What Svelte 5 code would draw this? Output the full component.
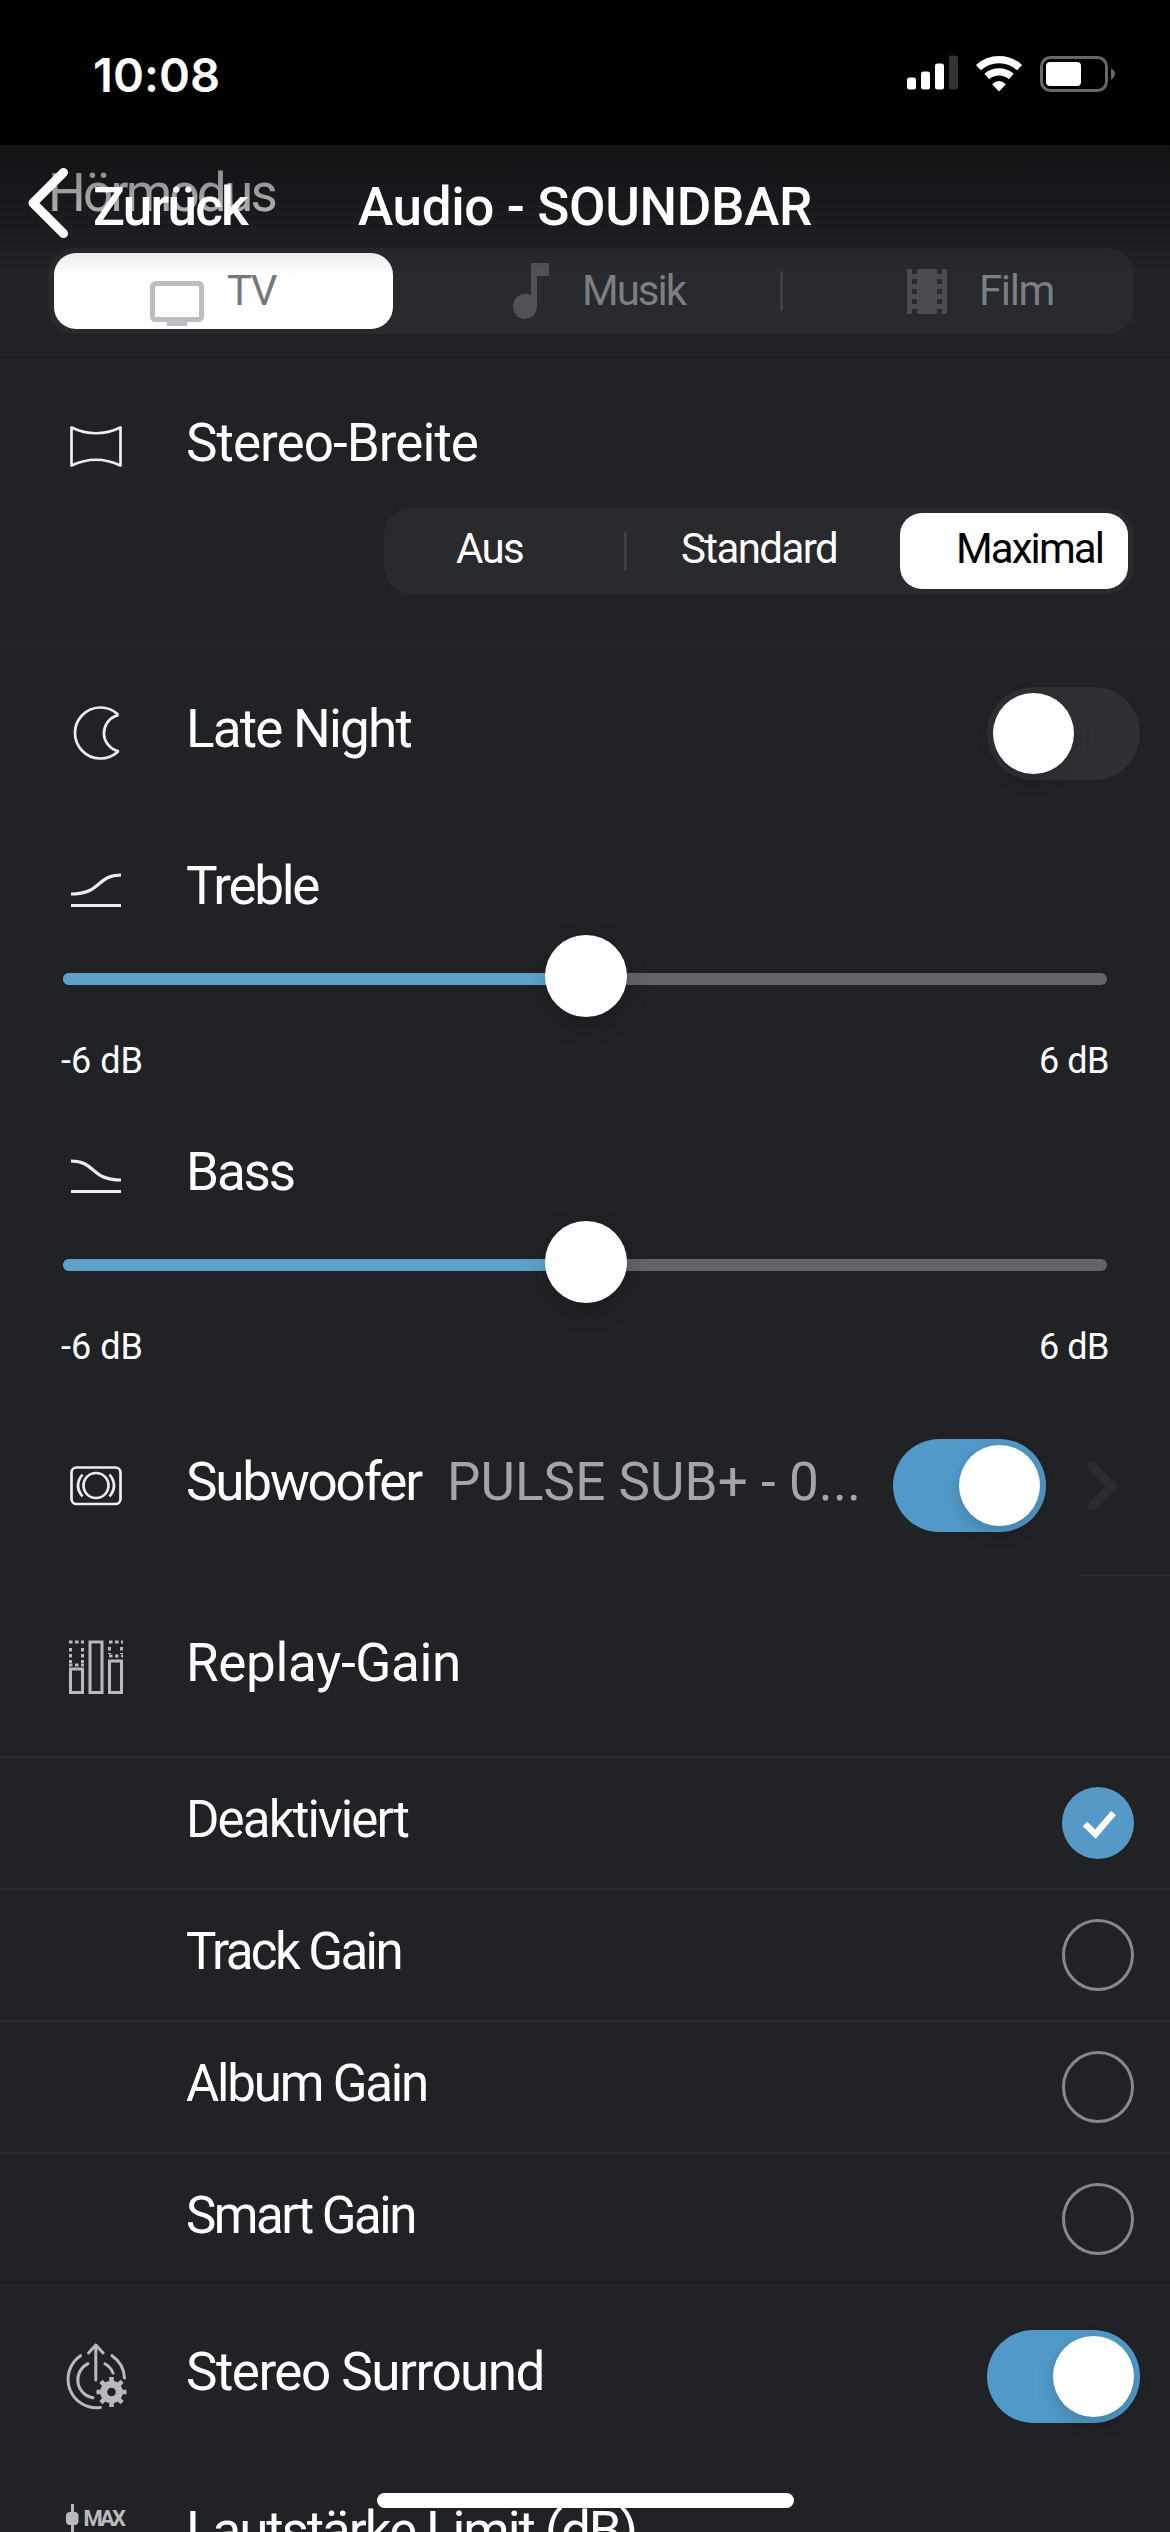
<script lang="ts">
    interface Option {
        label: string;
        width: number;
    }

    const gainOptions: Option[] = [
        { label: 'Deaktiviert', width: 222 },
        { label: 'Track Gain', width: 215 },
        { label: 'Album Gain', width: 241 },
        { label: 'Smart Gain', width: 229 }
    ];

    const gearTeeth: number[] = [0, 45, 90, 135, 180, 225, 270, 315];

    let gain: string = 'Deaktiviert';
    let lateNight: boolean = false;
    let subwoofer: boolean = true;
    let surround: boolean = true;
    let treble: number = 0;
    let bass: number = 0;

    function percent(value: number): number {
        return ((value + 6) / 12) * 100;
    }

    // Tracks a label so that it spans the given width
    function fit(node: HTMLElement, width: number): void {
        const natural = node.getBoundingClientRect().width;
        const gaps = (node.textContent ?? '').trim().length;
        node.style.letterSpacing = `${(width - natural) / gaps}px`;
    }
</script>

<div class="screen">
    <header class="status">
        <span class="time"><span use:fit={127}>10:08</span></span>
        <svg class="signal" viewBox="0 0 51 40">
            <rect x="0" y="22.500" width="9" height="12" rx="2.500" />
            <rect x="14" y="16.500" width="9" height="18" rx="2.500" />
            <rect x="28" y="8.500" width="9" height="26" rx="2.500" />
            <rect class="off" x="42" y="0.500" width="9" height="34" rx="2.500" />
        </svg>
        <svg class="wifi" viewBox="0 0 50 38">
            <path d="M3.500 13.500 A31 31 0 0 1 45.500 13.500" />
            <path d="M12 22.500 A19 19 0 0 1 37 22.500" />
            <path class="dot" d="M24.500 38 L17.500 30.500 Q24.500 24 31.500 30.500 Z" />
        </svg>
        <svg class="battery" viewBox="0 0 76 40">
            <rect class="shell" x="1.500" y="3.500" width="65" height="33" rx="9" />
            <rect x="6" y="8" width="35" height="24" rx="4" />
            <path class="nub" d="M71 14.500 Q75 16.500 75 20 Q75 23.500 71 25.500 Z" />
        </svg>
    </header>

    <nav>
        <button class="back">
            <svg viewBox="0 0 42 72"><path d="M36.500 5.500 L6 36 L36.500 66.500" /></svg>
            <span use:fit={154}>Zurück</span>
        </button>
        <h1><span use:fit={454}>Audio - SOUNDBAR</span></h1>
    </nav>

    <main>
        <section class="mode">
            <h2><span use:fit={227}>Hörmodus</span></h2>
            <div class="segments wide">
                <button class="segment active">
                    <svg class="tv" viewBox="0 0 54 45">
                        <rect x="2.500" y="2.500" width="49" height="36" rx="3" />
                        <path d="M17 38 H37 V45 H17 Z" />
                    </svg>
                    <span use:fit={49}>TV</span>
                </button>
                <button class="segment music">
                    <svg class="note" viewBox="0 0 36 56">
                        <path d="M18 0 H36 V13 H24 V43 A12 12.500 0 1 1 18 32.500 Z" />
                    </svg>
                    <span use:fit={103}>Musik</span>
                </button>
                <i class="divider"></i>
                <button class="segment movie">
                    <svg class="film" viewBox="0 0 40 45">
                        <path d="M0 0 H5 V5 H10 V0 H30 V5 H35 V0 H40 V45 H35 V40 H30 V45 H10 V40 H5 V45 H0 Z
                            M5 10 V15 H10 V10 Z M5 20 V25 H10 V20 Z M5 30 V35 H10 V30 Z
                            M30 10 V15 H35 V10 Z M30 20 V25 H35 V20 Z M30 30 V35 H35 V30 Z" />
                    </svg>
                    <span use:fit={75}>Film</span>
                </button>
            </div>
        </section>

        <section class="stereo">
            <div class="head">
                <svg class="icon" viewBox="0 0 60 66">
                    <path d="M5.500 13.500 Q30 25 54.500 13.500 V51.500 Q30 40 5.500 51.500 Z" />
                </svg>
                <span class="label"><span use:fit={292}>Stereo-Breite</span></span>
            </div>
            <div class="segments narrow">
                <button class="segment"><span use:fit={67}>Aus</span></button>
                <i class="divider"></i>
                <button class="segment standard"><span use:fit={156}>Standard</span></button>
                <button class="segment active maximal"><span use:fit={147}>Maximal</span></button>
            </div>
        </section>

        <section class="row late">
            <svg class="icon" viewBox="0 0 60 66">
                <path d="M51.500 14 A25.500 25.500 0 1 0 51.500 52 C52.500 51 51.500 50.500 50 50.500 A18.500 18.500 0 0 1 49.500 16 C51.500 15.500 52 15 51.500 14 Z" />
            </svg>
            <span class="label"><span use:fit={225}>Late Night</span></span>
            <button class="toggle" class:on={lateNight} aria-label="Late Night" on:click={() => (lateNight = !lateNight)}></button>
        </section>

        <section class="level">
            <div class="head">
                <svg class="icon" viewBox="0 0 60 66">
                    <path d="M5 37 C36 37 30 18 55 18 M5 48.500 H55" />
                </svg>
                <span class="label"><span use:fit={132}>Treble</span></span>
            </div>
            <div class="slider">
                <div class="fill" style="width: {percent(treble)}%"></div>
                <div class="knob" style="left: {percent(treble)}%"></div>
            </div>
            <div class="range">
                <span use:fit={82}>-6 dB</span>
                <span use:fit={70}>6 dB</span>
            </div>
        </section>

        <section class="level">
            <div class="head">
                <svg class="icon" viewBox="0 0 60 66">
                    <path d="M5 18 C30 18 24 37 55 37 M5 48.500 H55" />
                </svg>
                <span class="label"><span use:fit={108}>Bass</span></span>
            </div>
            <div class="slider">
                <div class="fill" style="width: {percent(bass)}%"></div>
                <div class="knob" style="left: {percent(bass)}%"></div>
            </div>
            <div class="range">
                <span use:fit={82}>-6 dB</span>
                <span use:fit={70}>6 dB</span>
            </div>
        </section>

        <section class="row sub">
            <svg class="icon" viewBox="0 0 60 66">
                <rect x="5.500" y="14.500" width="49" height="36.500" rx="5" />
                <circle cx="30" cy="32.500" r="12.500" />
                <path d="M16.500 21.500 Q7.500 32.500 16.500 43.500 M43.500 21.500 Q52.500 32.500 43.500 43.500" />
            </svg>
            <span class="label"><span use:fit={235}>Subwoofer</span></span>
            <span class="label device"><span use:fit={414}>PULSE SUB+ - 0...</span></span>
            <button class="toggle" class:on={subwoofer} aria-label="Subwoofer" on:click={() => (subwoofer = !subwoofer)}></button>
            <svg class="more" viewBox="0 0 30 50"><path d="M5 5 L25 25 L5 45" /></svg>
        </section>

        <section class="row replay">
            <svg class="icon dim" viewBox="0 0 60 66">
                <rect x="4.500" y="35" width="12" height="23.500" />
                <rect x="24" y="8" width="12" height="50.500" />
                <rect x="43.500" y="27" width="12" height="31.500" />
                <path class="dots" d="M3 8 H18 M3 31 H18 M4.500 14 V29 M16.500 14 V29 M43 8 H57 M43 22 H57 M43.500 13 V20 M55.500 13 V20" />
            </svg>
            <span class="label"><span use:fit={275}>Replay-Gain</span></span>
        </section>

        {#each gainOptions as option}
            <div class="option">
                <span class="label"><span use:fit={option.width}>{option.label}</span></span>
                <button class="radio" class:checked={gain === option.label} aria-label={option.label} on:click={() => (gain = option.label)}>
                    {#if gain === option.label}
                        <svg viewBox="0 0 72 72"><path d="M23 37 L33.500 47 L51.500 26" /></svg>
                    {/if}
                </button>
            </div>
        {/each}

        <section class="row surround">
            <svg class="icon dim" viewBox="0 0 60 66">
                <path d="M14.500 12.700 A28.500 28.500 0 0 0 34.300 64.500 M22 20.700 A18 18 0 0 0 27 54.700
                    M46 12.700 A28.500 28.500 0 0 1 58.500 35 M39 20.700 A18 18 0 0 1 47 30
                    M29.800 37 V2 M22.500 10 L29.800 2 L37.100 10" />
                <circle class="gear" cx="45.500" cy="49" r="7.800" />
                {#each gearTeeth as angle}
                    <path class="tooth" d="M45.500 40 V34" transform="rotate({angle} 45.500 49)" />
                {/each}
            </svg>
            <span class="label"><span use:fit={358}>Stereo Surround</span></span>
            <button class="toggle" class:on={surround} aria-label="Stereo Surround" on:click={() => (surround = !surround)}></button>
        </section>

        <section class="row limit">
            <svg class="icon dim" viewBox="0 0 60 66">
                <path d="M6.500 2 V66" />
                <rect class="solid" x="0" y="10" width="12.500" height="13" rx="4" />
                <text x="17.500" y="23.500" textLength="42.500">MAX</text>
            </svg>
            <span class="label"><span use:fit={450}>Lautstärke Limit (dB)</span></span>
        </section>
    </main>

    <div class="home"></div>
</div>

<style>
    :global(body) {
        background: #212226;
    }

    .screen {
        position: relative;
        width: 1170px;
        height: 2532px;
        overflow: hidden;
        background: #212226;
        color: #fff;
        font-family: Roboto, 'Noto Sans', sans-serif;
        font-size: 53px;
        white-space: nowrap;
    }

    .screen * {
        box-sizing: border-box;
    }

    button {
        padding: 0;
        border: 0;
        background: none;
        color: inherit;
        font: inherit;
    }

    svg {
        display: block;
        flex: none;
        fill: none;
        overflow: visible;
    }

    .status {
        display: flex;
        height: 145px;
        padding: 0 54px 0 93px;
        align-items: center;
        background: #000;
    }

    .time {
        flex: 1;
        padding-top: 4px;
        font-family: Inter, sans-serif;
        font-size: 47px;
        font-weight: 600;
    }

    .signal,
    .battery {
        height: 40px;
        fill: #fff;
    }

    .signal {
        width: 51px;
        margin: 4px 17px 0 0;
    }

    .off {
        fill: #333;
    }

    .wifi {
        width: 49px;
        height: 38px;
        margin-right: 16px;
        stroke: #fff;
        stroke-width: 7.500;
    }

    .dot {
        fill: #fff;
        stroke: none;
    }

    .battery {
        width: 76px;
        margin-top: 3px;
    }

    .shell {
        fill: none;
        stroke: #68686a;
        stroke-width: 3;
    }

    .nub {
        fill: #68686a;
    }

    nav {
        position: absolute;
        z-index: 2;
        top: 145px;
        left: 0;
        width: 100%;
        height: 130px;
        padding-top: 22px;
        background: linear-gradient(rgba(0, 0, 0, 0.450), rgba(0, 0, 0, 0.080) 83%, transparent);
        display: grid;
        grid-template-columns: 358px 1fr;
        align-items: start;
        font-weight: 500;
    }

    .back {
        display: flex;
        gap: 24px;
        padding-left: 27px;
        line-height: 80px;
    }

    .back svg {
        width: 42px;
        height: 72px;
        stroke: #fff;
        stroke-width: 9;
        stroke-linecap: round;
        stroke-linejoin: round;
    }

    h1,
    h2 {
        margin: 0;
        font-size: inherit;
        font-weight: inherit;
        line-height: 80px;
    }

    .mode {
        height: 210px;
        padding: 8px 36px 0 48px;
    }

    h2 {
        height: 95px;
        color: #dedede;
        font-weight: 400;
    }

    .segments {
        display: flex;
        height: 86px;
        padding: 5px 6px;
        align-items: center;
        border-radius: 27px;
        background: #282a2d;
        font-size: 42px;
    }

    .segment {
        display: flex;
        height: 76px;
        line-height: 76px;
    }

    .active {
        border-radius: 22px;
        background: #fff;
    }

    .wide {
        color: #7b7e82;
    }

    .wide .segment {
        align-items: center;
    }

    .wide .active {
        width: 339px;
        padding-left: 96px;
        gap: 23px;
        color: #74787d;
    }

    .tv {
        width: 54px;
        height: 45px;
        margin-top: 24px;
        stroke: #bbbdbf;
        stroke-width: 5;
    }

    .tv path {
        fill: #bbbdbf;
        stroke: none;
    }

    .music {
        width: 387px;
        padding-left: 120px;
        gap: 33px;
    }

    .note {
        width: 36px;
        height: 56px;
        fill: #505256;
    }

    .divider {
        width: 3px;
        height: 40px;
        border-radius: 2px;
        background: #3e4044;
    }

    .movie {
        padding-left: 124px;
        gap: 32px;
    }

    .film {
        width: 40px;
        height: 45px;
        fill: #4b4c50;
    }

    .stereo {
        height: 286px;
        padding-top: 51px;
        border-top: 1px solid #242529;
    }

    .head,
    .row {
        display: flex;
        align-items: center;
        padding-left: 66px;
    }

    .head {
        height: 80px;
    }

    .icon {
        width: 60px;
        height: 66px;
        margin-right: 60px;
        stroke: #eceeee;
        stroke-width: 2.700;
        stroke-linejoin: round;
    }

    .level .icon {
        stroke-width: 3.200;
    }

    .dim {
        stroke: #b9babc;
        stroke-width: 3;
    }

    .label {
        padding-bottom: 8px;
        line-height: 70px;
    }

    .narrow {
        width: 750px;
        margin: 21px 0 0 384px;
    }

    .narrow .segment:first-child {
        width: 234px;
        padding-left: 66px;
    }

    .narrow .segment span {
        position: relative;
        top: -2px;
    }

    .standard {
        width: 273px;
        padding-left: 54px;
    }

    .maximal {
        width: 228px;
        padding-left: 56px;
        color: #000;
    }

    .late {
        height: 185px;
        padding-bottom: 2px;
        border-top: 1px solid #242529;
    }

    .toggle {
        width: 153px;
        height: 93px;
        margin: 0 30px 0 auto;
        padding: 6px;
        border-radius: 47px;
        background: #2e3034;
    }

    .toggle::before {
        content: '';
        display: block;
        width: 81px;
        height: 81px;
        border-radius: 50%;
        background: #fff;
        box-shadow: 0 6px 18px rgba(0, 0, 0, 0.160);
    }

    .toggle.on {
        background: #5199c8;
    }

    .toggle.on::before {
        margin-left: 60px;
    }

    .level {
        height: 286px;
    }

    .level .head {
        height: 127px;
    }

    .slider {
        position: relative;
        height: 12px;
        margin: 20px 63px 0;
        border-radius: 6px;
        background: #636468;
    }

    .fill {
        height: 12px;
        border-radius: 6px;
        background: #5ca2cc;
    }

    .knob {
        position: absolute;
        top: -38px;
        width: 82px;
        height: 82px;
        margin-left: -40px;
        border-radius: 50%;
        background: #fff;
        box-shadow: 0 8px 24px rgba(0, 0, 0, 0.180);
    }

    .range {
        display: flex;
        justify-content: space-between;
        padding: 46px 61px 0;
        font-size: 36px;
        line-height: 60px;
    }

    .sub {
        position: relative;
        height: 179px;
        padding-bottom: 4px;
    }

    .sub::after {
        content: '';
        position: absolute;
        right: 0;
        bottom: 1px;
        width: 94px;
        height: 1px;
        background: #292a2e;
    }

    .device {
        margin-left: 26px;
        color: #a5a5a7;
    }

    .sub .toggle {
        margin-right: 41px;
    }

    .more {
        width: 30px;
        height: 50px;
        margin-right: 53px;
        stroke: #2b2c30;
        stroke-width: 9;
        stroke-linecap: round;
        stroke-linejoin: round;
    }

    .replay {
        height: 179px;
    }

    .replay .icon {
        stroke-linejoin: miter;
    }

    .dots {
        stroke-dasharray: 3.500 2.500;
    }

    .option {
        display: flex;
        height: 132px;
        padding: 0 36px 0 186px;
        align-items: center;
        justify-content: space-between;
        border-top: 2px solid #2c2d31;
        font-size: 51px;
    }

    .option .label {
        padding-bottom: 6px;
    }

    .radio {
        width: 72px;
        height: 72px;
        border: 3px solid #87888a;
        border-radius: 50%;
    }

    .radio.checked {
        border: 0;
        background: #5799c6;
    }

    .radio svg {
        stroke: #fff;
        stroke-width: 6.500;
    }

    .surround {
        height: 183px;
        border-top: 1px solid #27282c;
    }

    .surround path {
        stroke-linecap: round;
    }

    .surround .gear {
        stroke-width: 7;
    }

    .surround .tooth {
        stroke-width: 4.500;
        stroke-linecap: butt;
    }

    .limit {
        height: 136px;
    }

    .solid,
    text {
        fill: #b9babc;
        stroke: none;
    }

    text {
        font-size: 22px;
        font-weight: 700;
    }

    .home {
        position: absolute;
        z-index: 3;
        bottom: 24px;
        left: 377px;
        width: 417px;
        height: 15px;
        border-radius: 8px;
        background: #fff;
    }
</style>
